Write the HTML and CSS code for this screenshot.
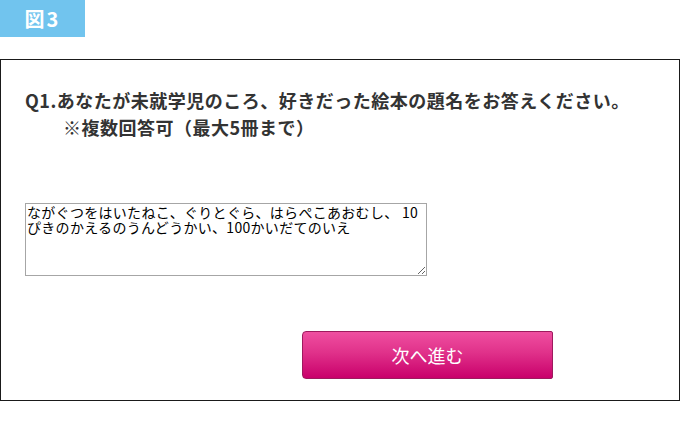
FILE: index.html
```html
<!DOCTYPE html>
<html lang="ja">
<head>
<meta charset="utf-8">
<title>図3</title>
<link rel="stylesheet" href="styles.css">
</head>
<body>
<div class="badge">図3</div>
<section class="box">
  <p class="q">Q1.あなたが未就学児のころ、好きだった絵本の題名をお答えください。</p>
  <p class="q note">※複数回答可（最大5冊まで）</p>
  <textarea class="answer">ながぐつをはいたねこ、ぐりとぐら、はらぺこあおむし、 10
ぴきのかえるのうんどうかい、100かいだてのいえ</textarea>
  <div class="actions"><button class="next" type="button">次へ進む</button></div>
</section>
</body>
</html>
```

FILE: styles.css
```css
html, body {
  margin: 0;
  padding: 0;
  background: #fff;
}
body {
  width: 680px;
  height: 444px;
  font-family: "Noto Sans CJK JP", "Noto Sans", sans-serif;
  color: #333;
}
.badge {
  width: 85px;
  height: 37px;
  background: #71c4ee;
  color: #fff;
  font-size: 20px;
  font-weight: bold;
  line-height: 37px;
  text-align: center;
  letter-spacing: 2px;
}
.box {
  margin-top: 22px;
  width: 680px;
  height: 342px;
  box-sizing: border-box;
  border: 1px solid #1a1a1a;
  padding: 27px 24px 0 24px;
}
.q {
  margin: 0;
  font-size: 18px;
  font-weight: bold;
  line-height: 27px;
  letter-spacing: 0.5px;
  color: #333;
}
.note {
  padding-left: 38px;
}
.answer {
  display: block;
  margin-top: 62px;
  width: 402px;
  height: 73px;
  box-sizing: border-box;
  border: 1px solid #a6a6a6;
  padding: 1px 1px;
  font-family: "Noto Sans CJK JP", sans-serif;
  font-size: 14px;
  line-height: 15px;
  letter-spacing: 0.3px;
  color: #000;
  background: #fff;
  white-space: pre-wrap;
  overflow: hidden;
}
.actions {
  margin-top: 55px;
  padding-left: 277px;
}
.next {
  display: block;
  width: 251px;
  height: 48px;
  border: 1px solid #9e1a5e;
  border-radius: 4px 2px 2px 4px;
  background: linear-gradient(#ef4fa0, #e0318a 45%, #c9006b);
  color: #fff;
  font-family: "Noto Sans CJK JP", sans-serif;
  font-size: 18px;
  padding: 0;
}
```
